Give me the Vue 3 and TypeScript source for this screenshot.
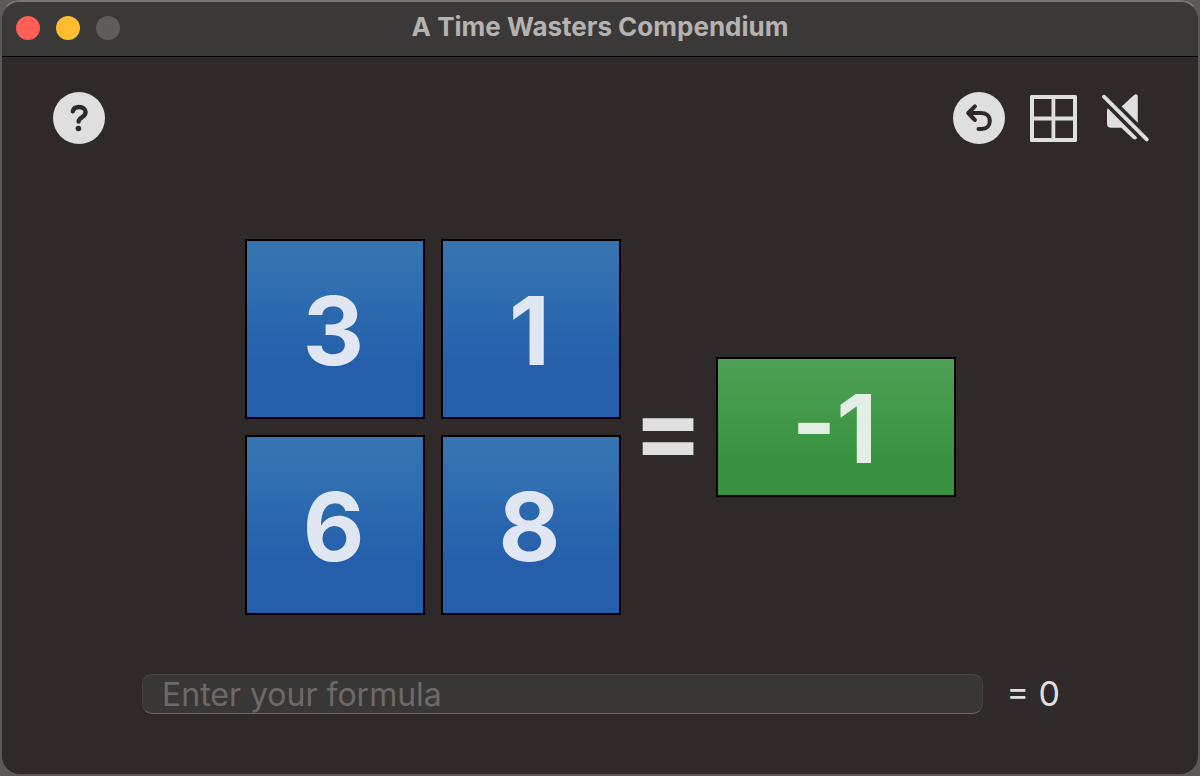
<script setup lang="ts">
import { computed, ref } from 'vue'

const title = 'A Time Wasters Compendium'
const tiles = ref<number[]>([3, 1, 6, 8])
const target = ref<number>(-1)
const formula = ref<string>('')

const result = computed<number>(() => {
  const terms = formula.value.replace(/\s+/g, '').match(/[+-]?\d+/g) ?? []
  return terms.reduce((sum, term) => sum + Number(term), 0)
})

function append(value: number): void {
  formula.value += String(value)
}

function undo(): void {
  formula.value = formula.value.slice(0, -1)
}
</script>

<template>
  <div class="window">
    <header class="titlebar">
      <div class="lights">
        <button class="light close" type="button" aria-label="Close"></button>
        <button class="light minimize" type="button" aria-label="Minimize"></button>
        <button class="light zoom" type="button" aria-label="Zoom" disabled></button>
      </div>
      <h1 class="title">{{ title }}</h1>
    </header>

    <main class="content">
      <nav class="toolbar">
        <button class="icon" type="button" aria-label="Help">
          <svg width="52" height="52" viewBox="0 0 52 52">
            <circle cx="26" cy="26" r="26" fill="#dfdfdf" />
            <path
              d="M19.8 19.3C20.3 16.5 22.6 15 26 15c3.9 0 6.6 2 6.6 5.1 0 2.4-1.2 3.8-3.6 5.3-2.3 1.4-3.3 2.3-3.4 4.2"
              fill="none" stroke="#2f2929" stroke-width="4.3" stroke-linecap="round" stroke-linejoin="round"
            />
            <circle cx="25.4" cy="36.5" r="2.8" fill="#2f2929" />
          </svg>
        </button>
        <div class="tools">
          <button class="icon" type="button" aria-label="Undo" @click="undo">
            <svg width="52" height="52" viewBox="0 0 52 52">
              <circle cx="26" cy="26" r="26" fill="#dfdfdf" />
              <path
                d="M21.9 14.4 15.2 21l6.7 7M15.8 21h12.7c5 0 8.3 3.1 8.3 8 0 4.8-3.2 7.9-8.1 7.9h-3.2"
                fill="none" stroke="#2f2929" stroke-width="4" stroke-linecap="round" stroke-linejoin="round"
              />
            </svg>
          </button>
          <button class="icon" type="button" aria-label="Grid">
            <svg width="47" height="47" viewBox="0 0 47 47">
              <path
                fill="#dfdfdf" fill-rule="evenodd"
                d="M1.5 0h44A1.5 1.5 0 0 1 47 1.5v44a1.5 1.5 0 0 1-1.5 1.5h-44A1.5 1.5 0 0 1 0 45.5v-44A1.5 1.5 0 0 1 1.5 0zM4 4v17.5h17.5V4zM25.3 4v17.5H43V4zM4 25.5V43h17.5V25.5zM25.3 25.5V43H43V25.5z"
              />
            </svg>
          </button>
          <button class="icon" type="button" aria-label="Sound off">
            <svg width="47" height="48" viewBox="0 0 47 48">
              <path
                fill="#dfdfdf"
                d="M19.6 12.5 32.1.9c1.6-1.3 3.7-.5 3.7 1.7v26.1zM5.8 14.2 35 43.6c-.3 2-2.3 2.5-3.9 1.2L19.3 33.7H9.2c-2.9 0-4.2-1.3-4.2-4.2V17.2c0-1.3.2-2.2.8-3z"
              />
              <path d="M2 2.7 44.7 45.4" fill="none" stroke="#dfdfdf" stroke-width="3.8" stroke-linecap="round" />
            </svg>
          </button>
        </div>
      </nav>

      <section class="board">
        <div class="tiles">
          <button v-for="(tile, index) in tiles" :key="index" class="tile" type="button" @click="append(tile)">
            {{ tile }}
          </button>
        </div>
        <span class="equals">=</span>
        <output class="target">{{ target }}</output>
      </section>

      <form class="entry" @submit.prevent>
        <input v-model="formula" class="field" type="text" placeholder="Enter your formula" aria-label="Formula" />
        <output class="result">= {{ result }}</output>
      </form>
    </main>
  </div>
</template>

<style>
body {
  margin: 0;
  background: #5b5a59;
}
</style>

<style scoped>
.window {
  box-sizing: border-box;
  display: flex;
  flex-direction: column;
  min-height: 100vh;
  overflow: hidden;
  border: 2px solid #5b5a59;
  border-top-color: #757574;
  border-radius: 20px;
  background: #2f2929;
  color: #dfdfdf;
  font-family: Inter, "Liberation Sans", sans-serif;
}

button {
  margin: 0;
  padding: 0;
  border: 0;
  background: none;
  color: inherit;
  font: inherit;
}

.titlebar {
  box-sizing: border-box;
  display: grid;
  grid-template-columns: 1fr auto 1fr;
  align-items: center;
  height: 55px;
  padding: 0 14px 2px;
  border-bottom: 1px solid #000;
  background: #3b3937;
}

.lights {
  display: flex;
  gap: 16px;
}

.light {
  width: 24px;
  height: 24px;
  border-radius: 50%;
}

.close {
  background: #ff5f57;
}

.minimize {
  background: #febc2e;
}

.zoom {
  background: #5f5c5a;
}

.title {
  margin: 0;
  padding-bottom: 2px;
  color: #b5b2b0;
  font-size: 26px;
  font-weight: 700;
  line-height: 32px;
}

.content {
  display: flex;
  flex: 1;
  flex-direction: column;
  padding: 35px 49px 60px 51px;
}

.toolbar,
.tools {
  display: flex;
  align-items: center;
  justify-content: space-between;
}

.tools {
  gap: 25px;
}

.icon {
  display: flex;
}

.board {
  display: flex;
  flex: 1;
  align-items: center;
  justify-content: center;
  padding: 36px 2px 0 0;
}

.tiles {
  display: grid;
  grid-template-columns: repeat(2, 180px);
  gap: 16px;
}

.tile,
.target {
  display: flex;
  box-sizing: border-box;
  align-items: center;
  justify-content: center;
  padding: 3px 2px 0 0;
  border: 2px solid #000;
  font-size: 95px;
  font-weight: 700;
  line-height: 116px;
}

.tile {
  height: 180px;
  background: linear-gradient(#3874b0, #2e6db0 30%, #255fab 70%);
  color: #e0e7f3;
}

.target {
  width: 240px;
  height: 140px;
  background: linear-gradient(#4fa057, #3f9846 50%, #38923f 75%);
  color: #e3eee4;
}

.equals {
  width: 95px;
  padding-top: 3px;
  font-size: 104px;
  font-weight: 700;
  line-height: 116px;
  text-align: center;
}

.entry {
  display: flex;
  align-items: center;
  gap: 23px;
  margin: 0 89px;
}

.field {
  box-sizing: border-box;
  flex: 1;
  min-width: 0;
  height: 40px;
  padding: 0 19px;
  border: 1px solid #4a4543;
  border-bottom-color: #6b6766;
  border-radius: 10px;
  outline: none;
  background: #393735;
  color: #dfdfdf;
  font: inherit;
  font-size: 32px;
}

.field::placeholder {
  color: #6d6967;
  opacity: 1;
}

.result {
  font-size: 34px;
  line-height: 40px;
  white-space: nowrap;
}
</style>
